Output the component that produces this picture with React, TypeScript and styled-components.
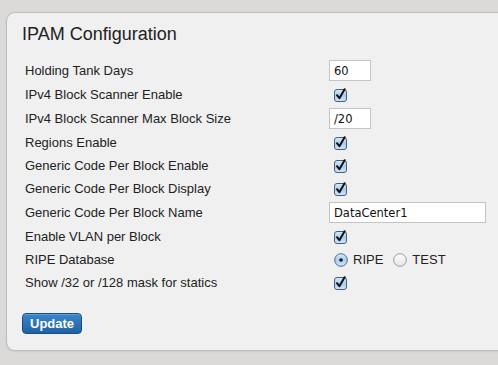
import React from "react";
import styled, { createGlobalStyle } from "styled-components";

const GlobalStyle = createGlobalStyle`
  html, body {
    margin: 0;
    padding: 0;
    background: #dbdad8;
    overflow: hidden;
  }
  body {
    font-family: "Liberation Sans", Arial, Helvetica, sans-serif;
    color: #222;
  }
`;

const Page = styled.div`
  padding: 12px 0 0 6px;
  width: 100vw;
  height: 100vh;
  box-sizing: border-box;
  overflow: hidden;
`;

const Panel = styled.div`
  width: calc(100% + 16px);
  height: 339px;
  box-sizing: border-box;
  background: #f0f0f0;
  border: 1px solid #bdbdbd;
  border-radius: 9px;
  box-shadow: 0 1px 2px rgba(0, 0, 0, 0.08);
  padding: 10px 0 0 15px;
`;

const Title = styled.h2`
  margin: 0 0 12px 0;
  font-size: 18px;
  font-weight: normal;
  line-height: 23px;
  color: #222;
`;

const Form = styled.div`
  display: flex;
  flex-direction: column;
  padding-left: 3px;
`;

const Row = styled.div<{ $tall?: boolean }>`
  display: grid;
  grid-template-columns: 304px 1fr;
  align-items: center;
  height: ${(p) => (p.$tall ? 25 : 23)}px;
`;

const Label = styled.div`
  font-size: 13px;
  color: #222;
`;

const Value = styled.div`
  display: flex;
  align-items: center;
`;

const TextInput = styled.input<{ $width: number }>`
  box-sizing: border-box;
  width: ${(p) => p.$width}px;
  height: 21px;
  border: 1px solid #c4c4c4;
  background: #fff;
  padding: 0 4px;
  font-family: "DejaVu Sans", Verdana, sans-serif;
  font-size: 11.5px;
  color: #111;
  outline: none;
  margin: 0;
`;

const BoxWrap = styled.span`
  display: inline-flex;
  margin-left: 5px;
  width: 13px;
  height: 14px;
`;

const RadioGroup = styled.div`
  display: flex;
  align-items: center;
  margin-left: 5px;
  gap: 5px;
`;

const RadioText = styled.span`
  font-size: 13px;
  color: #222;
  margin-right: 5px;
`;

const Footer = styled.div`
  margin-top: 19px;
`;

const Button = styled.button`
  height: 21px;
  padding: 0 7px;
  border: 1px solid #1a4d80;
  border-radius: 4px;
  background: linear-gradient(#3a86cc, #1f62a3);
  color: #fff;
  font-family: "Liberation Sans", Arial, sans-serif;
  font-weight: bold;
  font-size: 13px;
  line-height: 19px;
  box-shadow: inset 0 1px 0 rgba(255, 255, 255, 0.2);
`;

const Check = () => (
  <BoxWrap>
    <svg width="13" height="14" viewBox="0 0 13 14">
      <defs>
        <linearGradient id="cb" x1="0" y1="0" x2="0" y2="1">
          <stop offset="0" stopColor="#d7ebfb" />
          <stop offset="0.5" stopColor="#a9cdf0" />
          <stop offset="1" stopColor="#cfe6fb" />
        </linearGradient>
      </defs>
      <rect x="0.5" y="1.5" width="12" height="12" rx="2.5" fill="url(#cb)" stroke="#4a5f7d" />
      <path d="M3 7.2 L5.4 10.2 L10.6 1.2" fill="none" stroke="#111" strokeWidth="2" strokeLinecap="round" strokeLinejoin="round" />
    </svg>
  </BoxWrap>
);

const Radio = ({ on }: { on?: boolean }) => (
  <svg width="14" height="14" viewBox="0 0 14 14">
    <defs>
      <linearGradient id="rb" x1="0" y1="0" x2="0" y2="1">
        <stop offset="0" stopColor="#d7ebfb" />
        <stop offset="0.5" stopColor="#a9cdf0" />
        <stop offset="1" stopColor="#d3e9fc" />
      </linearGradient>
      <linearGradient id="rw" x1="0" y1="0" x2="0" y2="1">
        <stop offset="0" stopColor="#fdfdfd" />
        <stop offset="1" stopColor="#e6e6e6" />
      </linearGradient>
    </defs>
    <circle cx="7" cy="7" r="6.3" fill={on ? "url(#rb)" : "url(#rw)"} stroke={on ? "#4f6888" : "#9a9a9a"} />
    {on && <circle cx="7" cy="7" r="1.8" fill="#1a1a1a" />}
  </svg>
);

const rows: { label: string; kind: "text" | "check" | "radio"; value?: string; width?: number }[] = [
  { label: "Holding Tank Days", kind: "text", value: "60", width: 42 },
  { label: "IPv4 Block Scanner Enable", kind: "check" },
  { label: "IPv4 Block Scanner Max Block Size", kind: "text", value: "/20", width: 42 },
  { label: "Regions Enable", kind: "check" },
  { label: "Generic Code Per Block Enable", kind: "check" },
  { label: "Generic Code Per Block Display", kind: "check" },
  { label: "Generic Code Per Block Name", kind: "text", value: "DataCenter1", width: 157 },
  { label: "Enable VLAN per Block", kind: "check" },
  { label: "RIPE Database", kind: "radio" },
  { label: "Show /32 or /128 mask for statics", kind: "check" },
];

export default function App() {
  return (
    <>
      <GlobalStyle />
      <Page>
        <Panel>
          <Title>IPAM Configuration</Title>
          <Form>
            {rows.map((r) => (
              <Row key={r.label} $tall={r.kind === "text"}>
                <Label>{r.label}</Label>
                <Value>
                  {r.kind === "text" && <TextInput $width={r.width || 42} defaultValue={r.value} />}
                  {r.kind === "check" && <Check />}
                  {r.kind === "radio" && (
                    <RadioGroup>
                      <Radio on />
                      <RadioText>RIPE</RadioText>
                      <Radio />
                      <RadioText>TEST</RadioText>
                    </RadioGroup>
                  )}
                </Value>
              </Row>
            ))}
          </Form>
          <Footer>
            <Button>Update</Button>
          </Footer>
        </Panel>
      </Page>
    </>
  );
}
